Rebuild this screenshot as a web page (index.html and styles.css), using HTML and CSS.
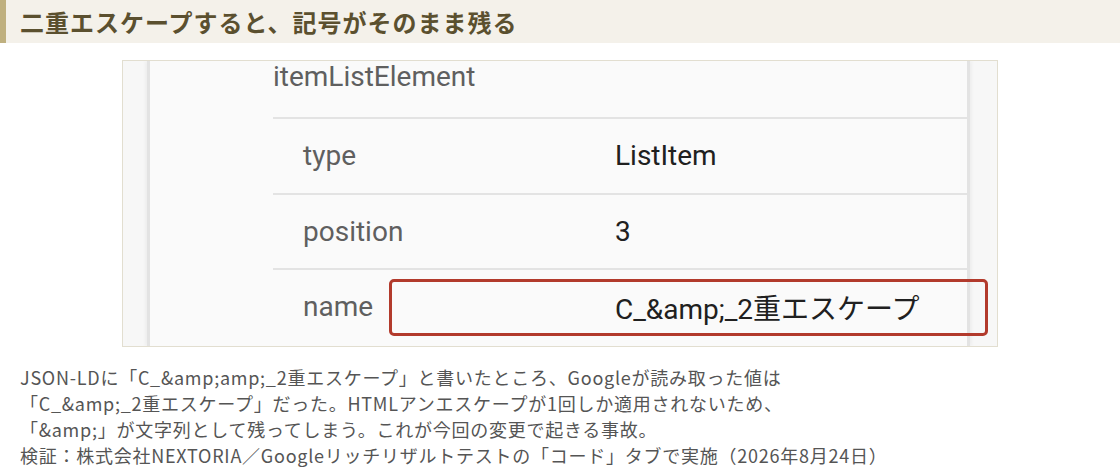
FILE: index.html
```html
<!DOCTYPE html>
<html lang="ja">
<head>
	<meta charset="UTF-8">
	<meta name="viewport" content="width=device-width, initial-scale=1.0">
	<title>二重エスケープすると、記号がそのまま残る</title>
	<link rel="stylesheet" href="styles.css">
</head>
<body>
	<h2 class="section-title">二重エスケープすると、記号がそのまま残る</h2>

	<figure class="figure">
		<div class="shot">
			<div class="panel">
				<div class="group-title">itemListElement</div>
				<div class="row">
					<span class="key">type</span>
					<span class="value">ListItem</span>
				</div>
				<div class="row">
					<span class="key">position</span>
					<span class="value">3</span>
				</div>
				<div class="row">
					<span class="key">name</span>
					<span class="value">C_&amp;amp;_2重エスケープ</span>
				</div>
			</div>
			<!-- highlight around the broken value -->
			<div class="mark"></div>
		</div>
		<figcaption class="caption">
			JSON-LDに「C_&amp;amp;amp;_2重エスケープ」と書いたところ、Googleが読み取った値は<br>
			「C_&amp;amp;_2重エスケープ」だった。HTMLアンエスケープが1回しか適用されないため、<br>
			「&amp;amp;」が文字列として残ってしまう。これが今回の変更で起きる事故。<br>
			検証：株式会社NEXTORIA／Googleリッチリザルトテストの「コード」タブで実施（2026年8月24日）
		</figcaption>
	</figure>
</body>
</html>
```

FILE: styles.css
```css
body {
	margin: 0;
	padding: 0;
	background: #fff;
	font-family: "Noto Sans CJK JP", "Noto Sans", sans-serif;
}

/** Heading bar */
.section-title {
	margin: 0;
	height: 43px;
	display: flex;
	align-items: center;
	padding-left: 14px;
	border-left: 6px solid #bfb07f;
	background: #f4f1ea;
	color: #5b502f;
	font-size: 24px;
	font-weight: 700;
	letter-spacing: 1px;
}

.figure {
	margin: 17px 0 0;
}

/** Screenshot of the test tool */
.shot {
	position: relative;
	box-sizing: border-box;
	width: 876px;
	height: 287px;
	margin: 0 auto;
	display: flex;
	padding-left: 24px;
	border: 1px solid #e2ded0;
	background: #f7f7f7;
	overflow: hidden;
	font-family: Roboto, "Noto Sans CJK JP", sans-serif;
}
.panel {
	width: 823px;
	box-sizing: border-box;
	padding-left: 123px;
	border-left: 3px solid #e3e3e3;
	border-right: 3px solid #e3e3e3;
	background: #fafafa;
	box-shadow: 2px 0 3px rgba(0,0,0,.04), -2px 0 3px rgba(0,0,0,.04);
}
.group-title {
	height: 56px;
	line-height: 32px;
	font-size: 28px;
	color: #5f5f5f;
}
.row {
	height: 73.5px;
	display: grid;
	grid-template-columns: 312px 1fr;
	align-items: center;
	padding-left: 30px;
	border-top: 2px solid #e3e3e3;
	font-size: 28px;
}
.key {
	color: #5f5f5f;
}
.value {
	color: #202020;
}
.mark {
	position: absolute;
	left: 266px;
	top: 218px;
	width: 599px;
	height: 57px;
	box-sizing: border-box;
	border: 3px solid #b23a2c;
	border-radius: 5px;
}

/** Caption */
.caption {
	margin: 17px 0 0;
	padding-left: 20px;
	font-size: 18px;
	line-height: 26px;
	letter-spacing: .75px;
	color: #555;
}
```
